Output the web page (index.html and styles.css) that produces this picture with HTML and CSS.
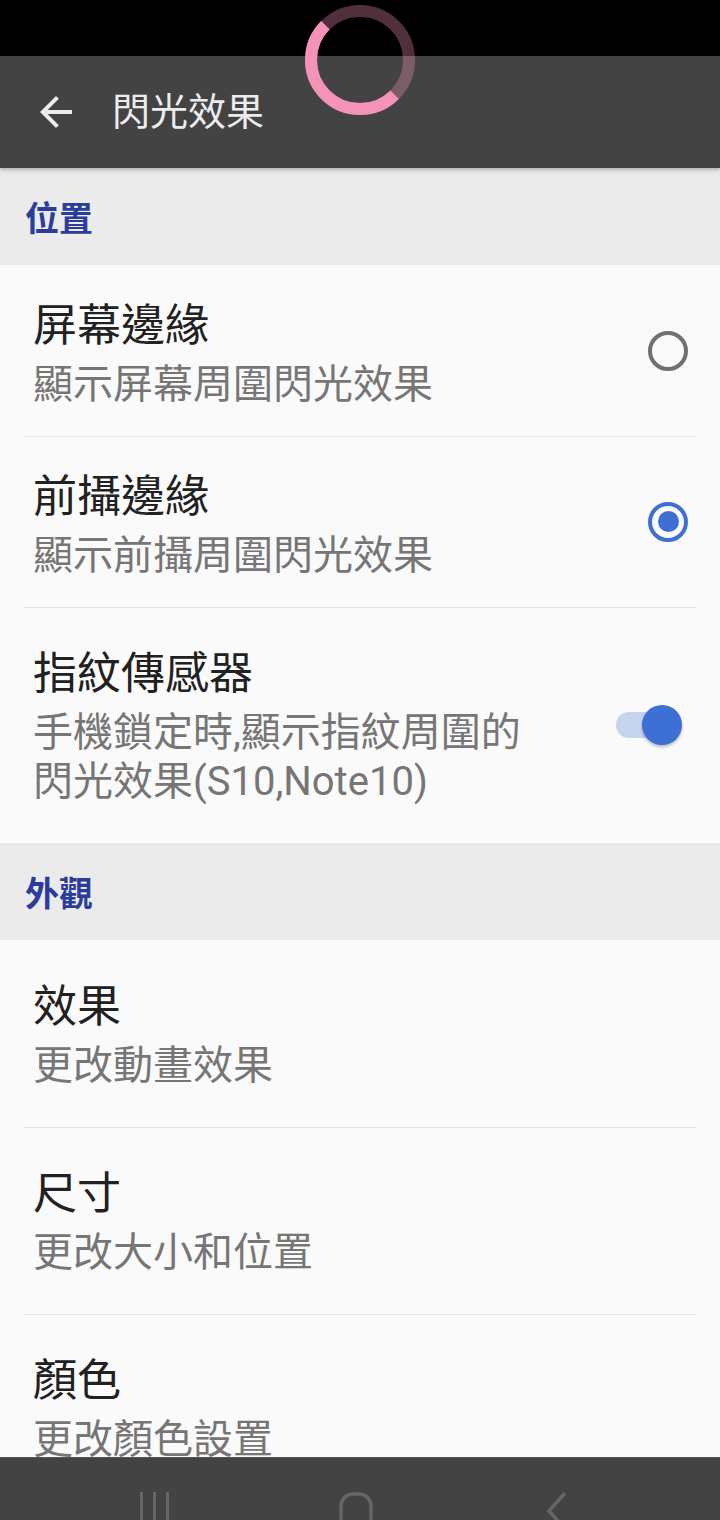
FILE: index.html
```html
<!DOCTYPE html>
<html lang="zh-Hant">
<head>
    <meta charset="UTF-8">
    <meta name="viewport" content="width=device-width, initial-scale=1.0">
    <title>閃光效果</title>
    <link rel="stylesheet" href="styles.css">
</head>
<body>
    <div class="status-bar"></div>

    <!-- loading ring sits over the status bar and toolbar -->
    <svg class="ring" width="110" height="110" viewBox="0 0 110 110">
        <circle cx="55" cy="55" r="49" fill="none" stroke="rgba(245,145,183,0.32)" stroke-width="12" />
        <circle cx="55" cy="55" r="49" fill="none" stroke="#f592b8" stroke-width="12"
                stroke-dasharray="154 308" transform="rotate(45 55 55)" />
    </svg>

    <header class="toolbar">
        <svg class="back" width="48" height="48" viewBox="0 0 24 24">
            <path d="M20 11H7.83l5.59-5.59L12 4l-8 8 8 8 1.41-1.41L7.83 13H20v-2z" fill="#ececec" />
        </svg>
        <h1>閃光效果</h1>
    </header>

    <main class="content">
        <div class="section-title">位置</div>
        <div class="list">
            <div class="item compact">
                <div class="text">
                    <div class="title">屏幕邊緣</div>
                    <div class="summary">顯示屏幕周圍閃光效果</div>
                </div>
                <div class="widget"><span class="radio"></span></div>
            </div>
            <div class="divider"></div>
            <div class="item compact">
                <div class="text">
                    <div class="title">前攝邊緣</div>
                    <div class="summary">顯示前攝周圍閃光效果</div>
                </div>
                <div class="widget"><span class="radio checked"></span></div>
            </div>
            <div class="divider"></div>
            <div class="item">
                <div class="text">
                    <div class="title">指紋傳感器</div>
                    <div class="summary">手機鎖定時,顯示指紋周圍的閃光效果(S10,Note10)</div>
                </div>
                <div class="widget">
                    <span class="switch"><span class="track"></span><span class="thumb"></span></span>
                </div>
            </div>
        </div>

        <div class="section-title">外觀</div>
        <div class="list">
            <div class="item">
                <div class="text">
                    <div class="title">效果</div>
                    <div class="summary">更改動畫效果</div>
                </div>
            </div>
            <div class="divider"></div>
            <div class="item">
                <div class="text">
                    <div class="title">尺寸</div>
                    <div class="summary">更改大小和位置</div>
                </div>
            </div>
            <div class="divider"></div>
            <div class="item">
                <div class="text">
                    <div class="title">顏色</div>
                    <div class="summary">更改顏色設置</div>
                </div>
            </div>
        </div>
    </main>

    <nav class="nav-bar">
        <div class="nav-btn">
            <svg width="32" height="40" viewBox="0 0 32 40">
                <rect x="1" y="0" width="3" height="40" fill="#666" />
                <rect x="14" y="0" width="3" height="40" fill="#666" />
                <rect x="27" y="0" width="3" height="40" fill="#666" />
            </svg>
        </div>
        <div class="nav-btn">
            <svg width="34" height="40" viewBox="0 0 34 40">
                <rect x="2" y="2" width="30" height="36" rx="12" fill="none" stroke="#666" stroke-width="3.5" />
            </svg>
        </div>
        <div class="nav-btn">
            <svg width="22" height="40" viewBox="0 0 22 40">
                <path d="M19 1 L3 19 L19 37" fill="none" stroke="#666" stroke-width="3.5" />
            </svg>
        </div>
    </nav>
</body>
</html>
```

FILE: styles.css
```css
* {
    margin: 0;
    padding: 0;
    box-sizing: border-box;
}

body {
    width: 720px;
    height: 1520px;
    overflow: hidden;
    display: flex;
    flex-direction: column;
    background-color: #fafafa;
    font-family: Roboto, "Noto Sans CJK TC", sans-serif;
    position: relative;
}

.status-bar {
    height: 56px;
    background-color: #000;
    flex-shrink: 0;
}

.ring {
    position: absolute;
    left: 305px;
    top: 5px;
    z-index: 5;
}

.toolbar {
    height: 112px;
    flex-shrink: 0;
    display: flex;
    align-items: center;
    padding-left: 32px;
    background-color: #434343;
    box-shadow: 0 2px 4px rgba(0, 0, 0, 0.25);
    position: relative;
    z-index: 2;
}

.toolbar h1 {
    margin-left: 32px;
    font-size: 38px;
    font-weight: 400;
    color: #ececec;
    line-height: 48px;
}

.content {
    flex: 1;
    overflow: hidden;
}

.section-title {
    height: 97px;
    display: flex;
    align-items: center;
    padding-left: 25px;
    background-color: #ebebeb;
    color: #2c3c9b;
    font-size: 34px;
    font-weight: 700;
}

.list {
    background-color: #fafafa;
}

.item {
    display: flex;
    align-items: center;
    padding: 41px 32px 37px 33px;
}

.item.compact {
    padding-top: 35px;
    padding-bottom: 27px;
}

.text {
    flex: 1;
}

.title {
    font-size: 44px;
    line-height: 52px;
    color: #212121;
}

.summary {
    margin-top: 8px;
    font-size: 40px;
    line-height: 49px;
    color: #767676;
}

.divider {
    height: 1px;
    margin: 0 24px -1px;
    background-color: #e3e3e3;
    position: relative;
}

.widget {
    width: 150px;
    display: flex;
    justify-content: flex-end;
    margin-bottom: 4px;
}

.item.compact .widget {
    margin-bottom: 8px;
}

.radio {
    width: 40px;
    height: 40px;
    border-radius: 50%;
    border: 4px solid #707070;
    display: flex;
    align-items: center;
    justify-content: center;
}

.radio.checked {
    border-color: #3f6fd4;
}

.radio.checked::after {
    content: "";
    width: 21px;
    height: 21px;
    border-radius: 50%;
    background-color: #3f6fd4;
}

.switch {
    width: 66px;
    height: 40px;
    margin-right: 6px;
    display: flex;
    align-items: center;
}

.track {
    width: 58px;
    height: 26px;
    border-radius: 13px;
    background-color: #c6d4f0;
}

.thumb {
    width: 40px;
    height: 40px;
    margin-left: -32px;
    border-radius: 50%;
    background-color: #3d6fd4;
    box-shadow: 0 2px 3px rgba(0, 0, 0, 0.25);
}

.nav-bar {
    height: 63px;
    flex-shrink: 0;
    display: flex;
    justify-content: center;
    align-items: flex-start;
    padding: 34px 8px 0 0;
    background-color: #434343;
    border-top: 1px solid #555;
    overflow: hidden;
}

.nav-btn {
    width: 201px;
    display: flex;
    justify-content: center;
}
```
